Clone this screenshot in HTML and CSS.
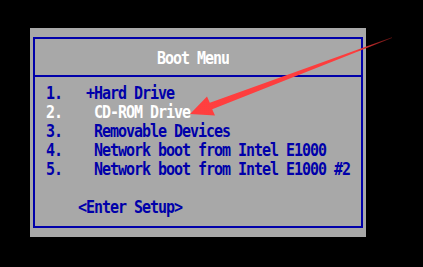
FILE: index.html
```html
<!DOCTYPE html>
<html lang="en">
  <head>
    <title>Boot Menu</title>
    <link rel="stylesheet" href="styles.css">
  </head>
  <body>
    <div class="screen">
      <div class="panel">
        <div class="box">
          <div class="header"><span class="title">Boot Menu</span></div>
          <ul class="items">
            <li>1.   +Hard Drive</li>
            <li class="selected">2.    CD-ROM Drive</li>
            <li>3.    Removable Devices</li>
            <li>4.    Network boot from Intel E1000</li>
            <li>5.    Network boot from Intel E1000 #2</li>
            <li class="blank"> </li>
            <li>    &lt;Enter Setup&gt;</li>
          </ul>
        </div>
      </div>
      <svg class="arrow" width="423" height="267" viewBox="0 0 423 267">
        <defs>
          <linearGradient id="fade" gradientUnits="userSpaceOnUse" x1="392" y1="37" x2="190" y2="114">
            <stop offset="0" stop-color="#5a0f0f" />
            <stop offset="0.18" stop-color="#fc3d3d" />
            <stop offset="1" stop-color="#ff3f3f" />
          </linearGradient>
        </defs>
        <polygon fill="url(#fade)" points="392,37.3 209.8,102.7 207,96.5 190,114 215,115.5 212.2,109.3 392,37.9" />
      </svg>
    </div>
  </body>
</html>
```

FILE: styles.css
```css
* {
  padding: 0;
  margin: 0;
  box-sizing: border-box;
}
body {
  background-color: #000;
  width: 423px;
  height: 267px;
  overflow: hidden;
}
.screen {
  position: relative;
  width: 423px;
  height: 267px;
  padding: 28px 0 0 30px;
}
.panel {
  width: 336px;
  height: 209px;
  padding: 9px 3px;
  background: #a8a8a8;
}
.box {
  height: 191px;
  border: 2px solid #0000aa;
  font-family: "DejaVu Sans Mono", "Liberation Mono", monospace;
  font-weight: bold;
  font-size: 15px;
  letter-spacing: -1.03px;
}
.header {
  height: 38px;
  border-bottom: 2px solid #0000aa;
  display: flex;
  align-items: center;
  justify-content: center;
  padding: 2px 10px 0 0;
  color: #fff;
}
.title {
  display: inline-block;
  transform: scaleY(1.22);
}
.items {
  list-style: none;
  padding: 8px 0 0 11px;
}
.items li {
  white-space: pre;
  line-height: 19px;
  height: 19px;
  color: #0000aa;
  transform: scaleY(1.12);
  transform-origin: 0 12px;
}
.items li.selected {
  color: #fff;
}
.arrow {
  position: absolute;
  top: 0;
  left: 0;
  pointer-events: none;
}
```
